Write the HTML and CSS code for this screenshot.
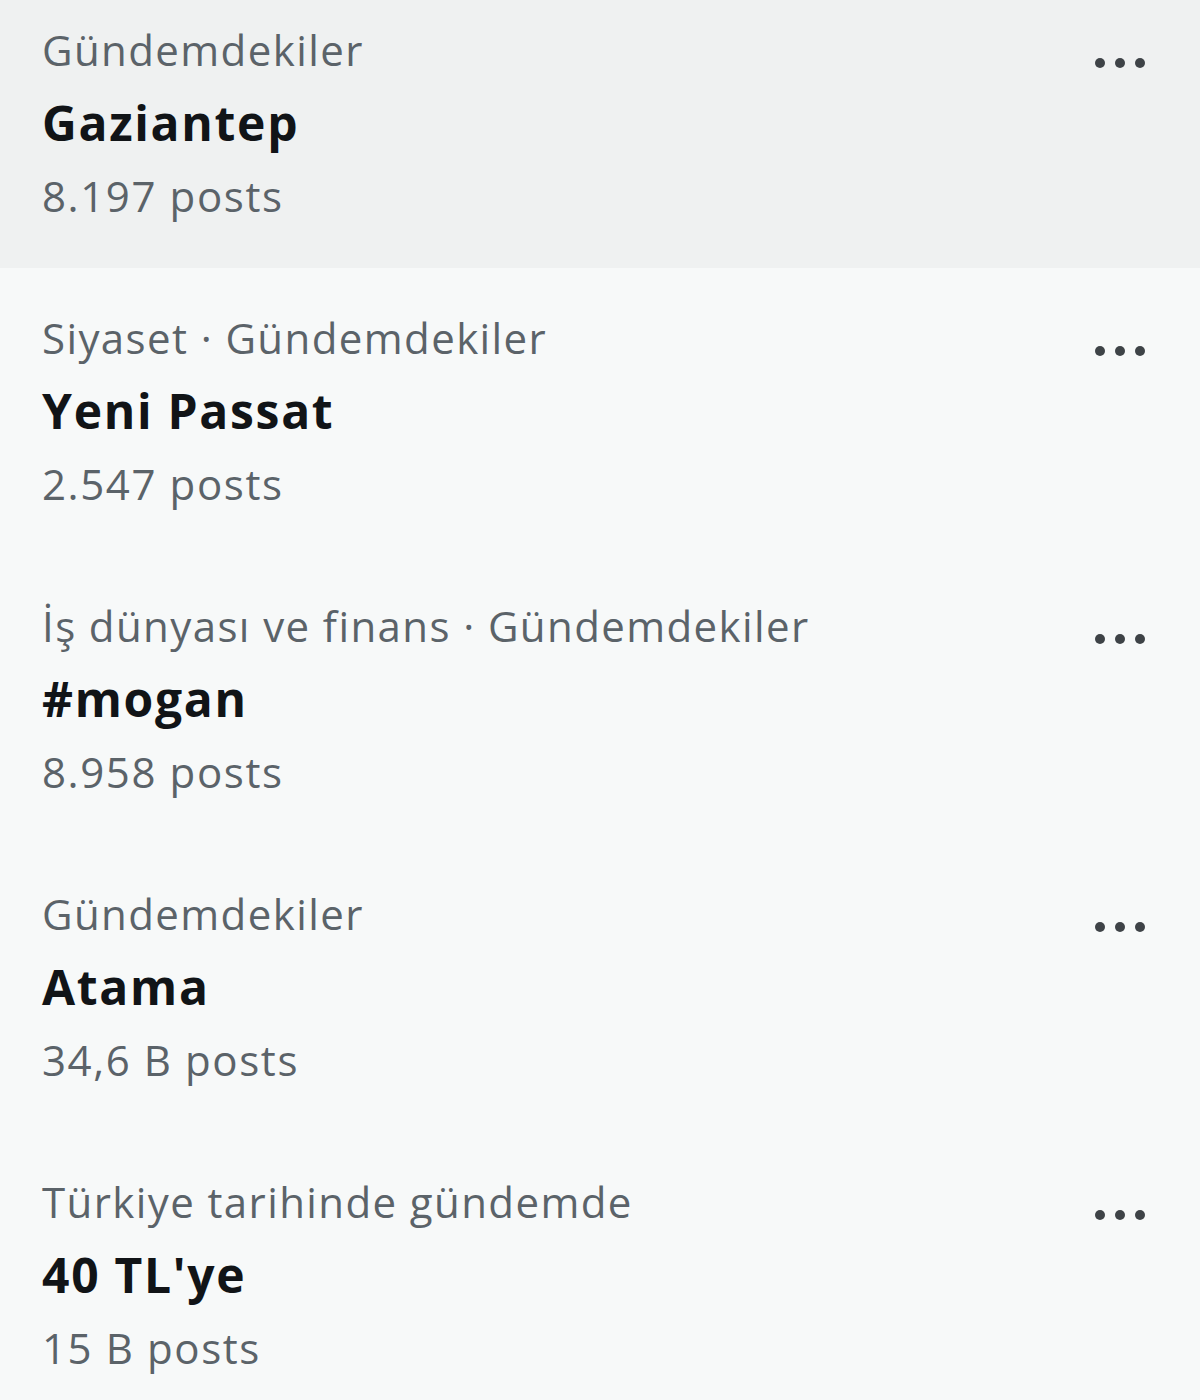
FILE: index.html
```html
<!DOCTYPE html>
<html lang="tr">
<head>
<meta charset="utf-8">
<link rel="stylesheet" href="styles.css">
</head>
<body>
<div class="trends">
  <div class="trend trend--hover trend--first">
    <div class="trend-text">
      <div class="trend-meta">Gündemdekiler</div>
      <div class="trend-title">Gaziantep</div>
      <div class="trend-count">8.197 posts</div>
    </div>
    <div class="trend-more"><span></span><span></span><span></span></div>
  </div>
  <div class="trend">
    <div class="trend-text">
      <div class="trend-meta">Siyaset · Gündemdekiler</div>
      <div class="trend-title">Yeni Passat</div>
      <div class="trend-count">2.547 posts</div>
    </div>
    <div class="trend-more"><span></span><span></span><span></span></div>
  </div>
  <div class="trend">
    <div class="trend-text">
      <div class="trend-meta">İş dünyası ve finans · Gündemdekiler</div>
      <div class="trend-title">#mogan</div>
      <div class="trend-count">8.958 posts</div>
    </div>
    <div class="trend-more"><span></span><span></span><span></span></div>
  </div>
  <div class="trend">
    <div class="trend-text">
      <div class="trend-meta">Gündemdekiler</div>
      <div class="trend-title">Atama</div>
      <div class="trend-count">34,6 B posts</div>
    </div>
    <div class="trend-more"><span></span><span></span><span></span></div>
  </div>
  <div class="trend">
    <div class="trend-text">
      <div class="trend-meta">Türkiye tarihinde gündemde</div>
      <div class="trend-title">40 TL'ye</div>
      <div class="trend-count">15 B posts</div>
    </div>
    <div class="trend-more"><span></span><span></span><span></span></div>
  </div>
</div>
</body>
</html>
```

FILE: styles.css
```css
html, body {
  margin: 0;
  padding: 0;
  background: #f7f9f9;
}
body {
  font-family: "Open Sans", "Noto Sans", sans-serif;
}
.trends {
  display: flex;
  flex-direction: column;
}
.trend {
  display: flex;
  justify-content: space-between;
  align-items: flex-start;
  padding: 33px 55px 36px 42px;
  height: 219px;
}
.trend--first {
  padding-top: 13px;
}
.trend--hover {
  background: #eff1f1;
}
.trend-meta,
.trend-count {
  font-size: 42px;
  line-height: 73px;
  color: #5b6369;
  letter-spacing: 1.4px;
}
.trend-count {
  letter-spacing: 1.6px;
}
.trend-title {
  font-size: 48px;
  line-height: 73px;
  font-weight: 700;
  color: #111417;
  letter-spacing: 1.7px;
}
.trend-more {
  display: flex;
  gap: 10px;
  margin-top: 45px;
}
.trend-more span {
  width: 10px;
  height: 10px;
  border-radius: 50%;
  background: #3e4347;
}
```
